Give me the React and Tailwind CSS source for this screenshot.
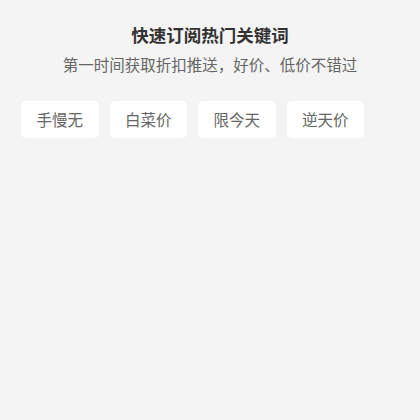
const keywords = ["手慢无", "白菜价", "限今天", "逆天价"];

export default function App() {
  return (
    <div
      className="min-h-[420px] w-full bg-[#f4f4f4]"
      style={{ fontFamily: '"Noto Sans CJK SC", "Noto Sans", sans-serif' }}
    >
      <div className="flex flex-col items-center pt-[24px]">
        <h1 className="text-[17.5px] leading-[22px] font-bold text-[#333333]">快速订阅热门关键词</h1>
        <p className="mt-[7px] text-[15.5px] leading-[22px] text-[#666666]">
          第一时间获取折扣推送，好价、低价不错过
        </p>
      </div>
      <div className="flex gap-[11px] pl-[21px] pt-[26px]">
        {keywords.map((k) => (
          <div
            key={k}
            className="flex h-[37px] w-[77.5px] items-center justify-center rounded-[5px] bg-white text-[15.5px] text-[#666666]"
          >
            {k}
          </div>
        ))}
      </div>
    </div>
  );
}
